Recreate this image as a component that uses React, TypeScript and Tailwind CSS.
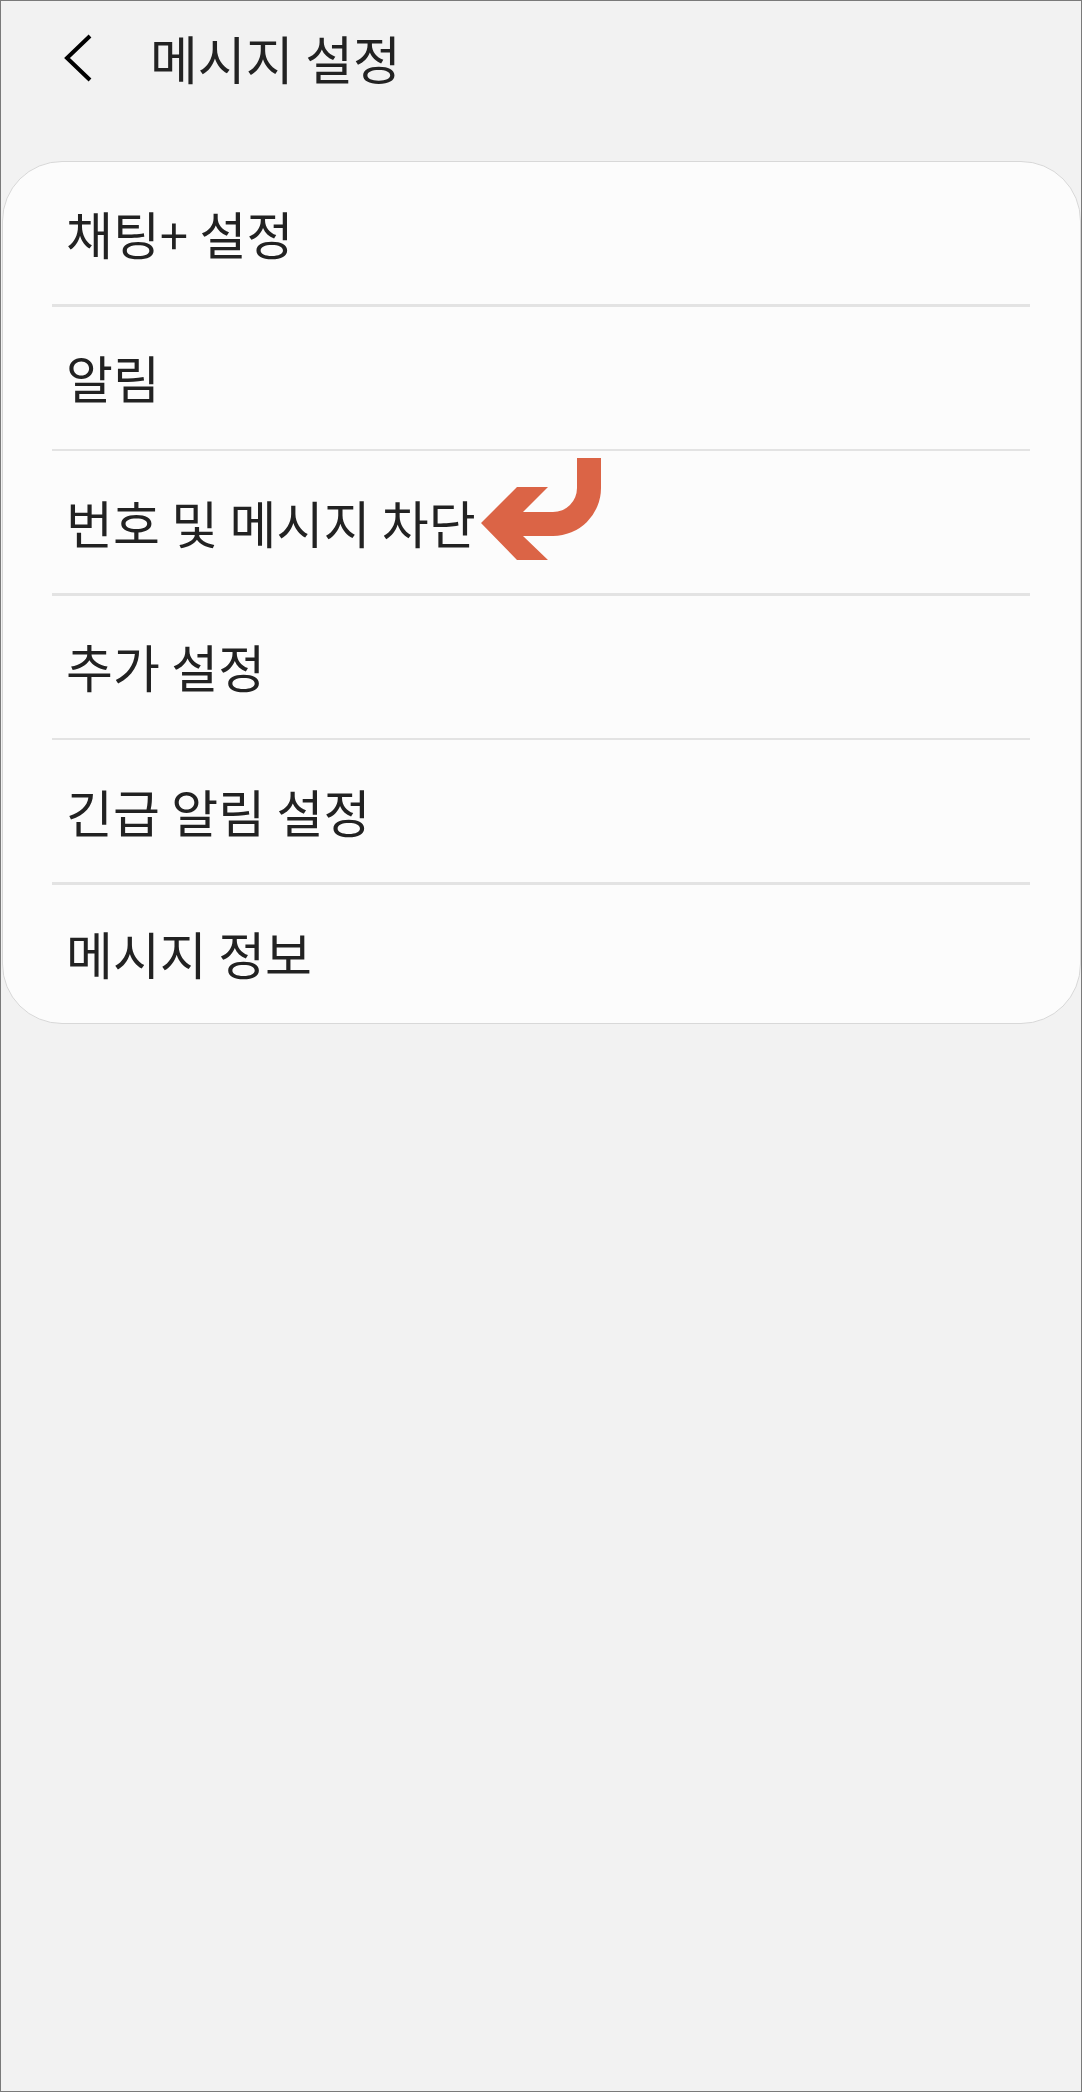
import React from 'react';

const items = ['채팅+ 설정', '알림', '번호 및 메시지 차단', '추가 설정', '긴급 알림 설정', '메시지 정보'];

function App() {
    return (
        <div
            className="w-[1082px] h-[2092px] bg-[#f2f2f2] border border-[#7a7a7a] box-border text-[#222222]"
            style={{fontFamily: '"Noto Sans CJK KR", "Noto Sans", sans-serif'}}
        >
            <div className="flex flex-row items-center h-[114px]">
                <svg className="ml-[62px]" width="30" height="48" viewBox="0 0 30 48">
                    <path d="M27 2 L4 24 L27 46" fill="none" stroke="#000" strokeWidth="4"/>
                </svg>
                <div className="ml-[57px] text-[52px] leading-none">메시지 설정</div>
            </div>

            <div className="relative mt-[46px] ml-[1px] bg-[#fcfcfc] border border-[#d8d8d8] rounded-[60px] flex flex-col">
                {items.map((label, i) => (
                    <React.Fragment key={label}>
                        {i > 0 && <div className="h-[2.5px] bg-[#e3e3e3] ml-[49px] mr-[50px]"/>}
                        <div className={(i === items.length - 1 ? 'h-[138.5px]' : 'h-[142px]') + ' flex items-center pl-[63px] text-[51px] leading-none'}>
                            {label}
                        </div>
                    </React.Fragment>
                ))}

                <svg className="absolute left-[475px] top-[293px]" width="126" height="108" viewBox="478 455 126 108">
                    <path
                        d="M481 523 L517 487 L548 487 L523 512 L553 512 A24 24 0 0 0 577 488 L577 458 L601 458 L601 488 A48 48 0 0 1 553 536 L523 536 L548 560 L517 560 Z"
                        fill="#db6446"
                    />
                </svg>
            </div>
        </div>
    );
}

export default App;
